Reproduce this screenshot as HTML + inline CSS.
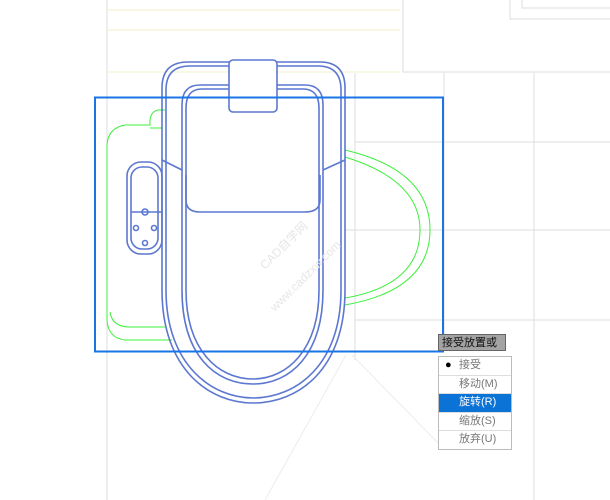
<!DOCTYPE html><html><head><meta charset="utf-8"><style>
body{margin:0;width:610px;height:500px;overflow:hidden;background:#fff;position:relative;font-family:"Liberation Sans","Noto Sans CJK SC",sans-serif}
.tip{position:absolute;left:438px;top:334px;height:17px;background:#a3a3a3;border:1px solid #666;font-size:11px;line-height:17px;padding-left:3px;box-sizing:border-box;width:68px;color:#111}
.menu{position:absolute;left:438px;top:356px;width:72px;border:1px solid #bbb;background:#fff;font-size:11px;color:#777}
.menu div{height:17.5px;line-height:17.5px;padding-left:20px;border-top:1px solid #ddd}
.menu div:first-child{border-top:none}
.menu .sel{background:#0b72d6;color:#fff}
</style></head><body>
<svg width="610" height="500" style="position:absolute;left:0;top:0">
<g stroke="#dcdcdc" stroke-width="1" fill="none">
<line x1="107" y1="0" x2="107" y2="500"/><line x1="355" y1="73" x2="355" y2="360"/><line x1="444" y1="73" x2="444" y2="340"/><line x1="534" y1="73" x2="534" y2="500"/>
<line x1="355" y1="142" x2="610" y2="142"/><line x1="345" y1="230" x2="610" y2="230"/><line x1="355" y1="320" x2="610" y2="320"/>
<path d="M403 0V72H610"/><path d="M510 0V19H610"/><path d="M522 0V8H610"/>
</g>
<g stroke="#ececec" fill="none"><path d="M352 355L440 445M346 355L265 500"/></g>
<g stroke="#f3f0c8" stroke-width="1"><line x1="108" y1="30" x2="400" y2="30"/><line x1="108" y1="72" x2="400" y2="72"/><line x1="108" y1="10" x2="400" y2="10"/></g>
<g stroke="#3cf03c" fill="none" stroke-width="1">
<path d="M165 110H158Q149 112 150 125H125Q108 128 107 145V320Q108 338 125 340H172"/>
<path d="M162 128H150M165 327H128Q112 326 110 312"/>
<path d="M345 150Q430 170 430 230Q430 290 345 305"/><path d="M345 157Q420 180 420 230Q420 285 345 298"/>
</g>
<g stroke="#4060c8" fill="none" stroke-width="1.6" opacity="0.85">
<path d="M162 290V88Q162 62 188 62H320Q345 62 345 88V290C345 370 298 403 253 403C210 403 162 370 162 290Z"/>
<path d="M166 290V90Q166 66 190 66H318Q341 66 341 90V290C341 365 296 398 253 398C212 398 166 365 166 290Z"/>
<path d="M182 290V105Q182 85 200 85H305Q323 85 323 105V290C323 355 290 384 253 384C215 384 182 355 182 290Z"/>
<path d="M186 290V108Q186 89 202 89H303Q319 89 319 108V290C319 350 287 379 253 379C218 379 186 350 186 290Z"/>
<path d="M186 175V200Q186 212 200 212H305Q320 212 320 200V175"/>
<path d="M162 160L182 170M345 160L323 170"/>
<rect x="229" y="60" width="48" height="52" rx="4" fill="#fff"/>
<rect x="127" y="162" width="35" height="92" rx="14"/><rect x="131" y="167" width="27" height="82" rx="11"/>
<line x1="131" y1="212" x2="162" y2="212"/>
<circle cx="145" cy="212" r="3"/><circle cx="136" cy="228" r="2.5"/><circle cx="154" cy="228" r="2.5"/><circle cx="145" cy="243" r="2.5"/>
</g>
<rect x="95" y="97.5" width="348" height="254" fill="none" stroke="#1a74e6" stroke-width="2"/>
<text x="265" y="270" transform="rotate(-45 265 270)" font-size="12" fill="#e6e6e6" font-family="Liberation Sans,Noto Sans CJK SC,sans-serif">CAD自学网</text>
<text x="275" y="312" transform="rotate(-45 275 312)" font-size="12" fill="#e6e6e6" font-family="Liberation Sans,sans-serif">www.cadzxw.com</text>
</svg>
<div class="tip">接受放置或</div>
<div class="menu"><div style="position:relative"><span style="position:absolute;left:6px;color:#000">●</span>接受</div><div>移动(M)</div><div class="sel">旋转(R)</div><div>缩放(S)</div><div>放弃(U)</div></div>
</body></html>
